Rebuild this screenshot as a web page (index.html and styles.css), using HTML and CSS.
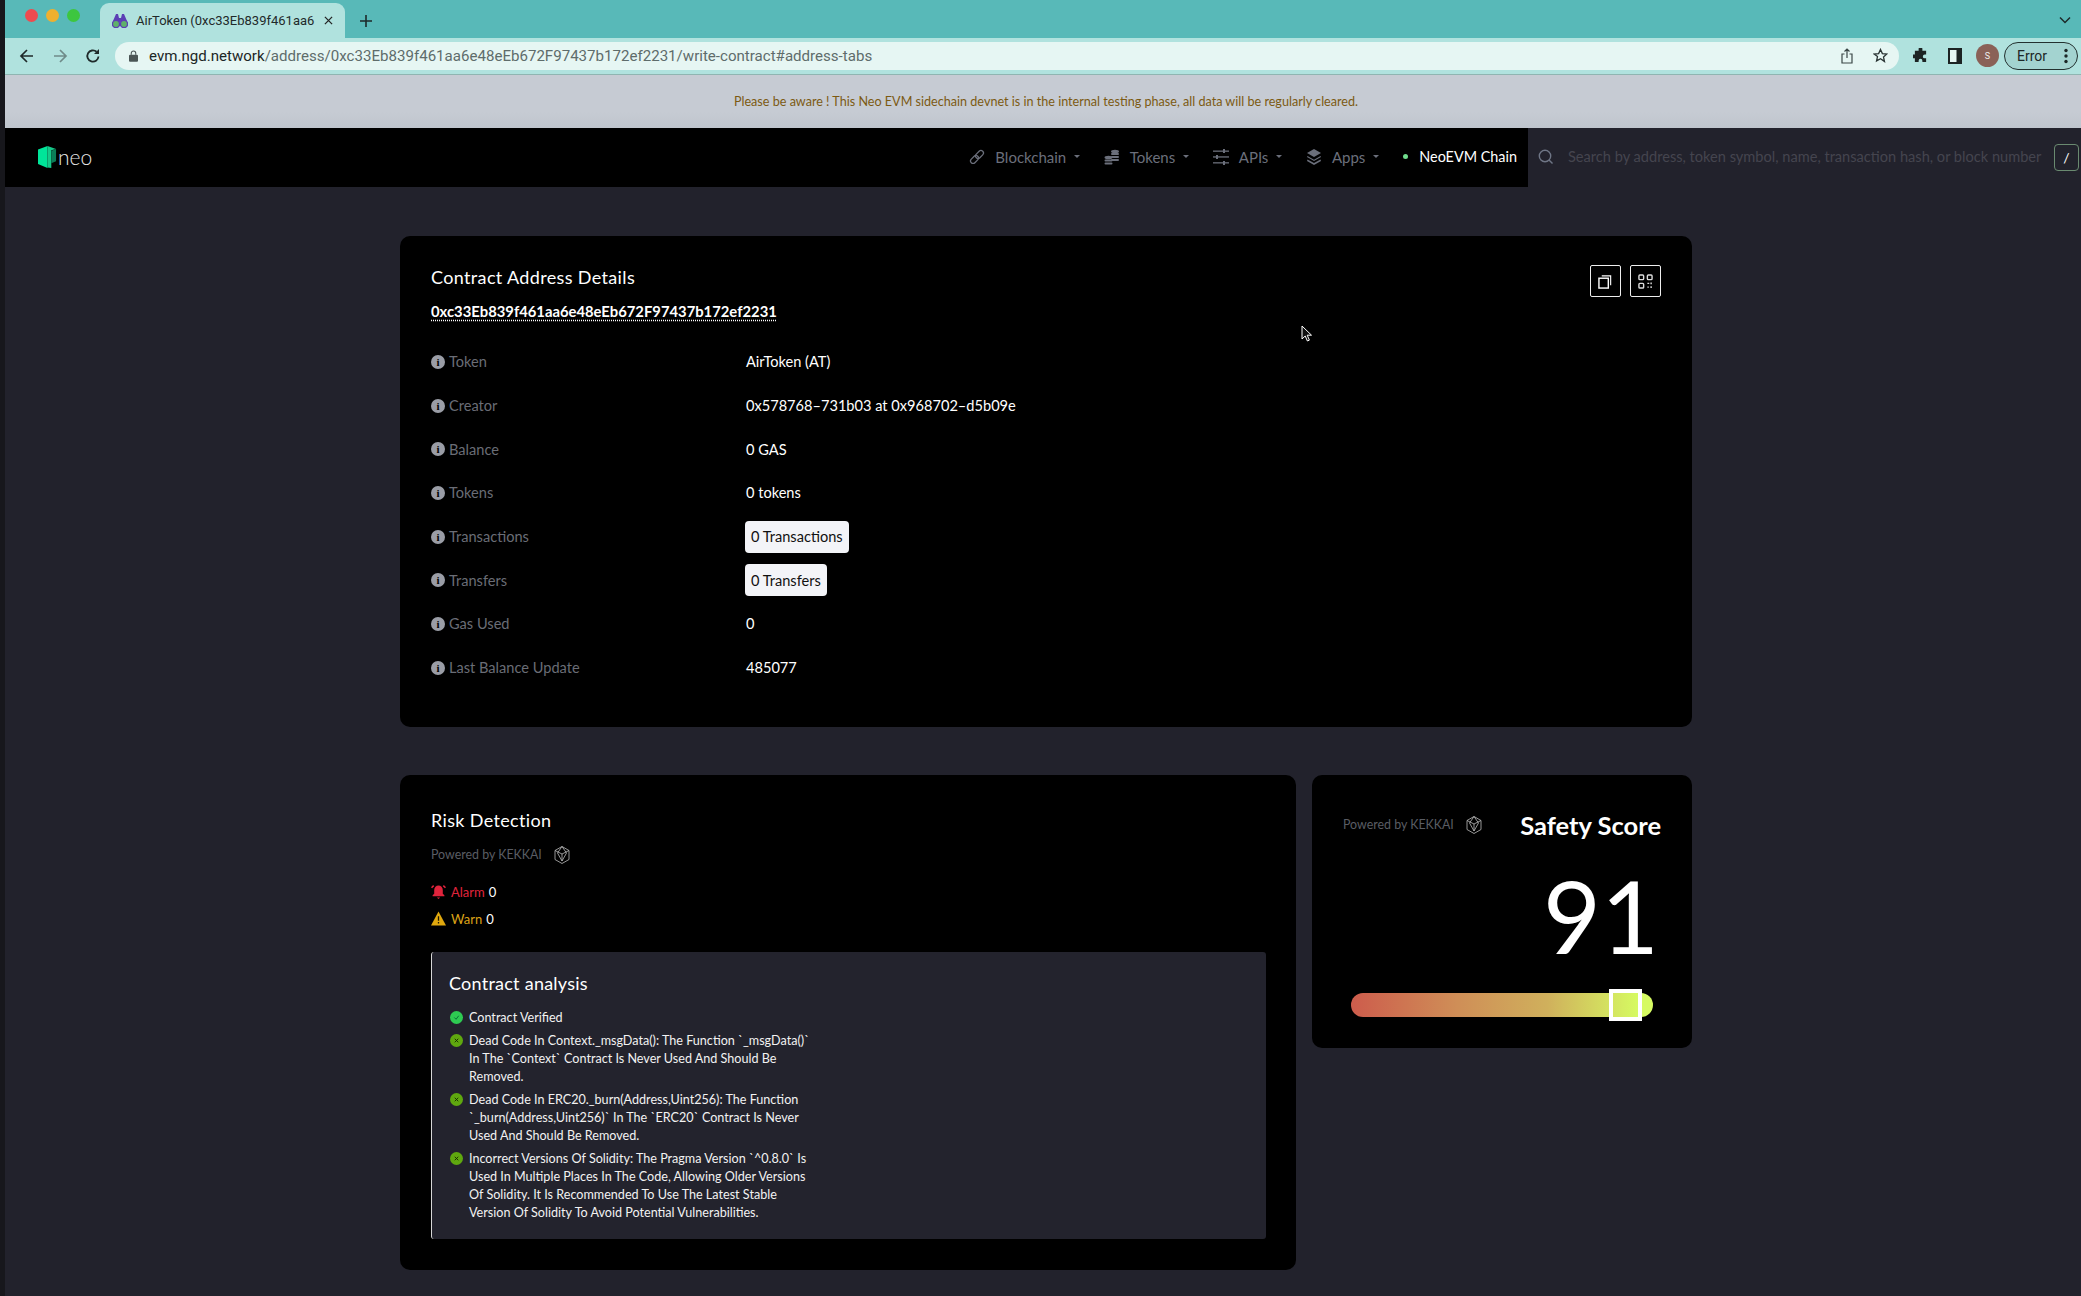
FILE: index.html
```html
<!DOCTYPE html>
<html lang="en">
<head>
    <meta charset="UTF-8">
    <title>AirToken (0xc33Eb839f461aa6e48eEb672F97437b172ef2231)</title>
    <link rel="stylesheet" href="styles.css">
</head>
<body>
<div class="screen">
    <!-- browser chrome -->
    <div class="tabstrip">
        <div class="lights">
            <span class="light red"></span>
            <span class="light yellow"></span>
            <span class="light green"></span>
        </div>
        <div class="tab">
            <svg class="tab-icon" viewBox="0 0 16 14"><path fill="#5b3fb5" d="M4 0h2l1 4h2l1-4h2l3 7-7 1-7-1z"/><circle cx="4" cy="10" r="3.6" fill="#5fb26a" stroke="#5b3fb5" stroke-width="1.4"/><circle cx="12" cy="10" r="3.6" fill="#5fb26a" stroke="#5b3fb5" stroke-width="1.4"/></svg>
            <span class="tab-title">AirToken (0xc33Eb839f461aa6</span>
            <svg class="tab-close" viewBox="0 0 10 10"><path d="M1 1l8 8M9 1l-8 8" stroke="#222" stroke-width="1.4"/></svg>
        </div>
        <svg class="new-tab" viewBox="0 0 14 14"><path d="M7 1v12M1 7h12" stroke="#1d2a2a" stroke-width="1.6"/></svg>
        <svg class="tab-menu" viewBox="0 0 12 8"><path d="M1 1.5l5 5 5-5" fill="none" stroke="#1d2a2a" stroke-width="1.5"/></svg>
    </div>
    <div class="toolbar">
        <svg class="tool-btn" viewBox="0 0 16 16"><path d="M14 8H2.5M8 2L2 8l6 6" fill="none" stroke="#1f2a2a" stroke-width="1.7"/></svg>
        <svg class="tool-btn" viewBox="0 0 16 16"><path d="M2 8h11.5M8 2l6 6-6 6" fill="none" stroke="#6f8b89" stroke-width="1.7"/></svg>
        <svg class="tool-btn" viewBox="0 0 16 16"><path d="M13.5 8.5A5.6 5.6 0 1 1 11.6 3.8" fill="none" stroke="#1f2a2a" stroke-width="1.8"/><path d="M14 1v5H9z" fill="#1f2a2a"/></svg>
        <div class="urlbar">
            <svg class="lock" viewBox="0 0 10 13"><path d="M2.5 5V3.4a2.5 2.5 0 0 1 5 0V5" fill="none" stroke="#4a5555" stroke-width="1.2"/><rect y="5" width="10" height="8" rx="1.2" fill="#4a5555"/></svg>
            <span class="url"><b>evm.ngd.network</b>/address/0xc33Eb839f461aa6e48eEb672F97437b172ef2231/write-contract#address-tabs</span>
            <svg class="share" viewBox="0 0 12 16"><path d="M3.5 6H1v9h10V6H8.500M6 10V1M3.500 3.500L6 1l2.500 2.500" fill="none" stroke="#3a4646" stroke-width="1.2"/></svg>
            <svg class="star" viewBox="0 0 16 16"><path d="M8 1.500l2 4.400 4.700.5-3.500 3.200 1 4.700L8 11.400l-4.200 2.400 1-4.700L1.300 6.400 6 5.900z" fill="none" stroke="#2a3434" stroke-width="1.400"/></svg>
        </div>
        <svg class="puzzle" viewBox="0 0 16 16"><path fill="#1c2323" d="M6 1a2 2 0 0 1 4 0v2h4v4h-1.500a2 2 0 0 0 0 4H14v4h-4v-1.500a2 2 0 0 0-4 0V15H2v-4H.500a2 2 0 0 1 0-4H2V3h4z"/></svg>
        <svg class="panel" viewBox="0 0 14 16"><rect width="14" height="16" fill="#1c2323"/><rect x="2" y="2" width="6.500" height="12" fill="#e6f6f3"/></svg>
        <span class="avatar">S</span>
        <div class="error-pill">
            <span>Error</span>
            <svg viewBox="0 0 4 16"><circle cx="2" cy="2.500" r="1.700"/><circle cx="2" cy="8" r="1.700"/><circle cx="2" cy="13.500" r="1.700"/></svg>
        </div>
    </div>

    <!-- site -->
    <div class="notice">Please be aware ! This Neo EVM sidechain devnet is in the internal testing phase, all data will be regularly cleared.</div>
    <nav class="navbar">
        <div class="nav-main">
            <a class="brand">
                <svg viewBox="0 0 20 24"><path fill="#00e599" d="M0 4.500L10 1v23l-10-4z"/><path fill="#16c98a" d="M10 1l9 3-5 1.500V24l-4-.5z"/><path fill="#0b7d58" d="M14 6l5-2v13l-5 2z"/></svg>
                <span>neo</span>
            </a>
            <div class="nav-links">
                <a class="nav-item">
                    <svg class="nav-icon" viewBox="0 0 16 16" fill="none" stroke="#6b6f7b" stroke-width="1.300"><rect x="1" y="8" width="9" height="5" rx="2.500" transform="rotate(-45 5.500 10.500)"/><rect x="6" y="3" width="9" height="5" rx="2.500" transform="rotate(-45 10.500 5.500)"/></svg>
                    Blockchain <i class="caret"></i>
                </a>
                <a class="nav-item">
                    <svg class="nav-icon" viewBox="0 0 16 16" fill="#6b6f7b"><ellipse cx="11" cy="2.500" rx="4" ry="1.800"/><rect x="7" y="4" width="8" height="2" rx="1"/><rect x="7" y="7" width="8" height="2" rx="1"/><rect x="7" y="10" width="8" height="2" rx="1"/><ellipse cx="4.500" cy="8.500" rx="4" ry="1.800"/><rect x=".5" y="10.500" width="8" height="2" rx="1"/><rect x=".5" y="13.500" width="8" height="2" rx="1"/></svg>
                    Tokens <i class="caret"></i>
                </a>
                <a class="nav-item">
                    <svg class="nav-icon" viewBox="0 0 16 16" fill="#6b6f7b"><rect y="1.500" width="16" height="1.300"/><rect y="7.300" width="16" height="1.300"/><rect y="13.200" width="16" height="1.300"/><path d="M10 0h2v4h-2zM3 6h2v4H3zM10 12h2v4h-2z"/></svg>
                    APIs <i class="caret"></i>
                </a>
                <a class="nav-item">
                    <svg class="nav-icon" viewBox="0 0 16 16" fill="#6b6f7b"><path d="M8 0l7 4-7 4-7-4z"/><path d="M1.500 7L8 10.700 14.500 7 15 8l-7 4-7-4z"/><path d="M1.500 10.500L8 14l6.500-3.500.5 1.500-7 4-7-4z"/></svg>
                    Apps <i class="caret"></i>
                </a>
                <a class="nav-item current"><i class="status-dot"></i>NeoEVM Chain</a>
            </div>
        </div>
        <div class="search">
            <svg class="search-icon" viewBox="0 0 16 16"><circle cx="7" cy="7" r="5.700" fill="none" stroke="#6f7686" stroke-width="1.400"/><path d="M11 11l3.500 3.500" stroke="#6f7686" stroke-width="1.400"/></svg>
            <span class="placeholder">Search by address, token symbol, name, transaction hash, or block number</span>
            <span class="slash">/</span>
        </div>
    </nav>

    <main class="content">
        <section class="card details">
            <h2 class="card-title">Contract Address Details</h2>
            <div class="address">0xc33Eb839f461aa6e48eEb672F97437b172ef2231</div>
            <div class="card-actions">
                <button class="square-btn"><svg viewBox="0 0 16 16"><rect x="1" y="4.500" width="10" height="10.500" fill="none" stroke="#fff" stroke-width="1.500"/><path d="M4 2h9.500v10" fill="none" stroke="#fff" stroke-width="1.200"/></svg></button>
                <button class="square-btn"><svg viewBox="0 0 16 16" fill="none" stroke="#ddd" stroke-width="1.500"><rect x="1" y="1" width="5" height="5" rx="1"/><rect x="10" y="1" width="5" height="5" rx="1"/><rect x="1" y="10" width="5" height="5" rx="1"/><path d="M10 10h2M14 9v2M10 14h1.500M14 13v2"/></svg></button>
            </div>
            <div class="info-rows">
                <div class="info-row"><div class="info-label"><i class="info-icon">i</i>Token</div><div class="info-value">AirToken (AT)</div></div>
                <div class="info-row"><div class="info-label"><i class="info-icon">i</i>Creator</div><div class="info-value">0x578768–731b03 at 0x968702–d5b09e</div></div>
                <div class="info-row"><div class="info-label"><i class="info-icon">i</i>Balance</div><div class="info-value">0 GAS</div></div>
                <div class="info-row"><div class="info-label"><i class="info-icon">i</i>Tokens</div><div class="info-value">0 tokens</div></div>
                <div class="info-row"><div class="info-label"><i class="info-icon">i</i>Transactions</div><div class="info-value"><span class="count-btn">0 Transactions</span></div></div>
                <div class="info-row"><div class="info-label"><i class="info-icon">i</i>Transfers</div><div class="info-value"><span class="count-btn">0 Transfers</span></div></div>
                <div class="info-row"><div class="info-label"><i class="info-icon">i</i>Gas Used</div><div class="info-value">0</div></div>
                <div class="info-row"><div class="info-label"><i class="info-icon">i</i>Last Balance Update</div><div class="info-value">485077</div></div>
            </div>
        </section>

        <div class="risk-grid">
            <section class="card risk">
                <h2 class="card-title">Risk Detection</h2>
                <div class="powered">Powered by KEKKAI
                    <svg class="kekkai" viewBox="0 0 16 18" fill="none" stroke="#bbb" stroke-width=".8"><path d="M8 .5l7 4v9l-7 4-7-4v-9z"/><path d="M1 4.500L8 8l7-3.500M3.500 7L8 15l4.500-8M8 8v7M8 .5L3.500 7M8 .5L12.500 7"/></svg>
                </div>
                <div class="risk-count">
                    <svg viewBox="0 0 14 14"><path fill="#e0243c" d="M7 1.500a4 4 0 0 1 4 4V9l1.500 1.500v1h-11v-1L3 9V5.500a4 4 0 0 1 4-4zM5.500 12.500h3L7 14zM0 3l2-2 1 1-2 2zM14 3l-2-2-1 1 2 2z"/></svg>
                    <span class="alarm">Alarm</span> 0
                </div>
                <div class="risk-count warn-row">
                    <svg viewBox="0 0 14 13"><path fill="#e0a80e" d="M7 0l7 13H0z"/><path d="M7 4.500v4M7 9.800v1.400" stroke="#1a1400" stroke-width="1.200"/></svg>
                    <span class="warn">Warn</span> 0
                </div>
                <div class="analysis">
                    <h3 class="analysis-title">Contract analysis</h3>
                    <ul class="analysis-list">
                        <li class="ok"><i class="mark"><svg viewBox="0 0 8 8"><path d="M1.500 4l2 2 3-4" fill="none" stroke="#063" stroke-width="1"/></svg></i><span>Contract Verified</span></li>
                        <li class="fail"><i class="mark"><svg viewBox="0 0 8 8"><path d="M2 2l4 4M6 2L2 6" stroke="#142400" stroke-width="1"/></svg></i><span>Dead Code In Context._msgData(): The Function `_msgData()`<br>In The `Context` Contract Is Never Used And Should Be<br>Removed.</span></li>
                        <li class="fail"><i class="mark"><svg viewBox="0 0 8 8"><path d="M2 2l4 4M6 2L2 6" stroke="#142400" stroke-width="1"/></svg></i><span>Dead Code In ERC20._burn(Address,Uint256): The Function<br>`_burn(Address,Uint256)` In The `ERC20` Contract Is Never<br>Used And Should Be Removed.</span></li>
                        <li class="fail"><i class="mark"><svg viewBox="0 0 8 8"><path d="M2 2l4 4M6 2L2 6" stroke="#142400" stroke-width="1"/></svg></i><span>Incorrect Versions Of Solidity: The Pragma Version `^0.8.0` Is<br>Used In Multiple Places In The Code, Allowing Older Versions<br>Of Solidity. It Is Recommended To Use The Latest Stable<br>Version Of Solidity To Avoid Potential Vulnerabilities.</span></li>
                    </ul>
                </div>
            </section>

            <section class="card safety">
                <div class="safety-head">
                    <div class="powered">Powered by KEKKAI
                        <svg class="kekkai" viewBox="0 0 16 18" fill="none" stroke="#bbb" stroke-width=".8"><path d="M8 .5l7 4v9l-7 4-7-4v-9z"/><path d="M1 4.500L8 8l7-3.500M3.500 7L8 15l4.500-8M8 8v7M8 .5L3.500 7M8 .5L12.500 7"/></svg>
                    </div>
                    <div class="safety-title">Safety Score</div>
                </div>
                <div class="score">91</div>
                <div class="score-bar"><span class="score-thumb"></span></div>
            </section>
        </div>
    </main>

    <svg class="cursor" viewBox="0 0 12 18"><path d="M1 1v13l3.200-3 2.200 5 2-.9-2.200-4.900H10.500z" fill="#111" stroke="#fff" stroke-width="1"/></svg>
</div>
</body>
</html>
```

FILE: styles.css
```css
* { box-sizing: border-box; }
html, body { margin: 0; padding: 0; background: #22222c; }
.screen { position: relative; width: 2081px; height: 1296px; overflow: hidden; border-left: 5px solid #17171c; font-family: Lato, "Noto Sans", sans-serif; color: #fff; background: #22222c; }

/* browser chrome */
.tabstrip { display: flex; align-items: flex-end; height: 38px; background: #58b9b8; position: relative; }
.lights { display: flex; gap: 8px; align-self: flex-start; margin: 9px 0 0 20px; width: 75px; }
.light { width: 13px; height: 13px; border-radius: 50%; }
.light.red { background: #ee4b4f; }
.light.yellow { background: #efb02e; }
.light.green { background: #3dc63f; }
.tab { display: flex; align-items: center; width: 245px; height: 35px; background: #b0e2de; border-radius: 9px 9px 0 0; padding: 0 12px; font-family: Roboto, sans-serif; font-size: 13px; color: #1f2a2a; }
.tab-icon { width: 16px; height: 14px; margin-right: 8px; }
.tab-title { flex: 1; white-space: nowrap; }
.tab-close { width: 9px; height: 9px; margin-left: 8px; }
.new-tab { width: 14px; height: 14px; margin: 0 0 10px 14px; }
.tab-menu { position: absolute; right: 10px; top: 16px; width: 12px; height: 8px; }

.toolbar { display: flex; align-items: center; height: 37px; background: #b0e2de; border-bottom: 1px solid #8fb5b1; padding-bottom: 1px; }
.tool-btn { width: 16px; height: 16px; margin-left: 15px; margin-right: 2px; }
.tool-btn:first-child { margin-left: 14px; }
.urlbar { display: flex; align-items: center; width: 1784px; height: 28px; margin-left: 12px; padding: 0 0 0 14px; background: #e6f6f3; border-radius: 14px; }
.lock { width: 9px; height: 12px; margin-right: 11px; }
.url { flex: 1; font-family: Roboto, sans-serif; font-size: 15.08px; color: #5e6c6b; white-space: nowrap; }
.url b { font-weight: 400; color: #1c2626; }
.share { width: 12px; height: 16px; margin-right: 20px; }
.star { width: 15px; height: 15px; margin-right: 11px; }
.puzzle { width: 15px; height: 15px; margin-left: 14px; }
.panel { width: 14px; height: 16px; margin-left: 20px; }
.avatar { display: flex; align-items: center; justify-content: center; width: 23px; height: 23px; margin-left: 14px; border-radius: 50%; background: #8a6157; color: #eee; font-family: Roboto, sans-serif; font-size: 9px; }
.error-pill { display: flex; align-items: center; justify-content: space-between; width: 74px; height: 28px; margin-left: 5px; padding: 0 9px 0 12px; border: 1px solid #23302f; border-radius: 14px; background: #a3d3d0; font-family: Roboto, sans-serif; font-size: 14px; color: #1c2626; }
.error-pill svg { width: 4px; height: 16px; fill: #1c2626; }

/* site header */
.notice { height: 53px; padding-left: 6px; display: flex; align-items: center; justify-content: center; background: linear-gradient(#c6cbd3 70%, #bfc5cd); color: #7c5a12; font-size: 12.6px; }
.navbar { display: flex; height: 59px; background: #22222c; }
.nav-main { display: flex; align-items: center; justify-content: space-between; width: 1523px; background: #000; padding: 0 11px 2px 33px; }
.brand { display: flex; align-items: center; gap: 1px; font-size: 21px; font-weight: 300; color: #e8e8e8; }
.brand svg { width: 19px; height: 23px; }
.nav-links { display: flex; align-items: center; }
.nav-item { display: flex; align-items: center; font-size: 15px; color: #6b6f7b; white-space: nowrap; margin-left: 23.5px; }
.nav-icon { width: 16px; height: 16px; margin-right: 10px; }
.caret { display: inline-block; width: 0; height: 0; margin-left: 8px; border: 3px solid transparent; border-top: 3px solid #6b6f7b; border-bottom: 0; }
.nav-item.current { color: #fff; margin-left: 24px; font-size: 14.4px; }
.status-dot { width: 5px; height: 5px; margin-right: 11px; border-radius: 50%; background: #6fdc8c; }
.search { flex: 1; display: flex; align-items: center; position: relative; padding: 0 0 2px 10px; }
.search-icon { width: 16px; height: 16px; margin-right: 14px; }
.placeholder { font-size: 14.6px; color: #45454f; white-space: nowrap; }
.slash { position: absolute; right: 2px; top: 16px; width: 25px; height: 27px; display: flex; align-items: center; justify-content: center; border: 1px solid #6a8a70; border-radius: 4px; font-size: 14px; color: #fff; }

/* cards */
.content { padding: 49px 0 0 395px; width: 1687px; }
.card { background: #000; border-radius: 10px; }
.card-title { margin: 0; font-size: 18px; line-height: 24px; font-weight: 400; letter-spacing: .35px; }
.details { position: relative; padding: 29px 31px 37px; }
.address { margin-top: 12px; width: max-content; font-size: 14.8px; line-height: 20px; font-weight: 700; text-decoration: underline dotted; text-underline-offset: 3px; }
.card-actions { position: absolute; top: 29px; right: 31px; display: flex; gap: 9px; }
.square-btn { display: flex; align-items: center; justify-content: center; width: 31px; height: 32px; padding: 0; background: transparent; border: 1px solid #eee; border-radius: 2px; }
.square-btn svg { width: 15px; height: 15px; }
.info-rows { margin-top: 19px; }
.info-row { display: grid; grid-template-columns: 315px 1fr; align-items: center; height: 43.7px; }
.info-label { display: flex; align-items: center; font-size: 14.6px; color: #6a6d76; }
.info-icon { display: flex; align-items: center; justify-content: center; width: 14px; height: 14px; margin-right: 4px; border-radius: 50%; background: #9a9da6; color: #000; font-family: "Liberation Serif", serif; font-size: 11px; font-weight: 700; font-style: normal; }
.info-value { font-size: 14.6px; color: #fff; }
.count-btn { display: inline-flex; align-items: center; height: 32px; margin-left: -1px; padding: 0 6px; border-radius: 4px; background: #f3f4f8; color: #111; }

.risk-grid { display: flex; align-items: flex-start; gap: 16px; margin-top: 48px; }
.risk { width: 896px; padding: 33px 30px 31px 31px; }
.powered { display: flex; align-items: center; margin-top: 14px; font-size: 12.4px; line-height: 18px; color: #5a5d64; }
.kekkai { width: 16px; height: 18px; margin-left: 12px; }
.risk-count { display: flex; align-items: center; margin-top: 18px; font-size: 13px; line-height: 20px; color: #fff; }
.risk-count svg { width: 15px; height: 15px; margin: 0 5px 0 0; }
.risk-count span { margin-right: 4px; }
.warn-row { margin-top: 7px; }
.alarm { color: #e0243c; }
.warn { color: #dca317; }
.analysis { margin-top: 23px; padding: 19px 17px 17px; background: #23232d; border-left: 1px solid #d8d8d8; border-radius: 3px; }
.analysis-title { margin: 0; font-size: 18px; line-height: 24px; font-weight: 400; letter-spacing: .25px; }
.analysis-list { list-style: none; margin: 14px 0 0; padding: 0; }
.analysis-list li { display: flex; margin-top: 5px; font-size: 12.6px; line-height: 18px; color: #f2f2f2; white-space: nowrap; }
.analysis-list li:first-child { margin-top: 0; }
.mark { display: flex; align-items: center; justify-content: center; flex: none; width: 13px; height: 13px; margin: 2px 6px 0 1px; border-radius: 50%; }
.mark svg { width: 7px; height: 7px; }
.ok .mark { background: #2ecb52; }
.fail .mark { background: #5fa80f; }

.safety { width: 380px; padding: 34px 31px 31px; }
.safety-head { display: flex; align-items: center; justify-content: space-between; height: 32px; }
.safety .powered { margin-top: 0; }
.safety-title { font-size: 25.5px; font-weight: 700; white-space: nowrap; }
.score { margin-top: 24px; padding-right: 2px; text-align: right; font-size: 100px; line-height: 100px; font-weight: 400; }
.score-bar { position: relative; height: 24px; margin: 28px 8px 0; border-radius: 12px; background: linear-gradient(90deg, #cd5c4c, #cf8e57 35%, #d0b05c 65%, #d6fa62 95%); }
.score-thumb { position: absolute; left: 258px; top: -4px; width: 33px; height: 32px; border: 4px solid #fff; }

.cursor { position: absolute; left: 1296px; top: 325px; width: 12px; height: 18px; }
```
